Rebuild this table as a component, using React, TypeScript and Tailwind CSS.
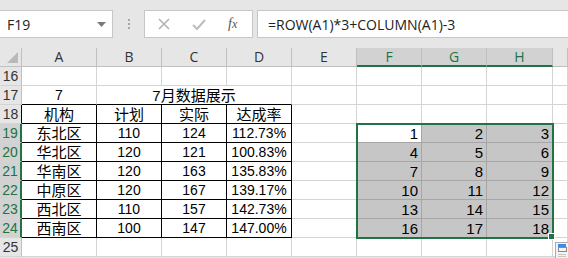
import { ReactNode } from "react";

const GREEN = "#217346";

// column widths in px: row header, A..H, and the partial column past H
const colWidths = [22, 75, 65, 65, 65, 65, 65, 65, 66, 15];
const colLetters = ["A", "B", "C", "D", "E", "F", "G", "H", ""];

const regions = [
  ["东北区", "110", "124", "112.73%"],
  ["华北区", "120", "121", "100.83%"],
  ["华南区", "120", "163", "135.83%"],
  ["中原区", "120", "167", "139.17%"],
  ["西北区", "110", "157", "142.73%"],
  ["西南区", "100", "147", "147.00%"],
];

const cellFont = {
  fontFamily: '"Liberation Sans", "Noto Sans CJK SC", sans-serif',
};

type CellProps = {
  children?: ReactNode;
  className?: string;
  span?: number;
};

const Cell = ({ children, className = "", span }: CellProps) => (
  <div
    className={`h-[19px] box-border border-r border-b flex items-center overflow-hidden whitespace-nowrap text-[14px] leading-none text-black ${className}`}
    style={span ? { gridColumn: `span ${span}` } : undefined}
  >
    {children}
  </div>
);

const RowHeader = ({ n, selected, tableEdge }: { n: number; selected?: boolean; tableEdge?: boolean }) => (
  <div
    className={`h-[19px] box-border border-b border-b-[#d4d4d4] flex items-center justify-center text-[14px] leading-none ${
      selected
        ? "bg-[#d2d2d2] text-[#217346] border-r-2 border-r-[#217346]"
        : tableEdge
          ? "bg-[#e6e6e6] text-[#333] border-r border-r-black"
          : "bg-[#e6e6e6] text-[#333] border-r border-r-[#c0c0c0]"
    }`}
  >
    {n}
  </div>
);

const NameBox = () => (
  <div className="w-[113px] h-[28px] box-border bg-white border-y border-r border-[#c6c6c6] flex items-center justify-between pl-[7px] pr-[6px]">
    <span className="text-[14px] text-[#222]" style={{ fontFamily: '"Open Sans", sans-serif' }}>
      F19
    </span>
    <svg width="9" height="5" viewBox="0 0 9 5">
      <path d="M0 0h9L4.5 5z" fill="#7a7a7a" />
    </svg>
  </div>
);

const FormulaButtons = () => (
  <div className="w-[109px] h-[28px] box-border bg-white border border-[#c6c6c6] flex items-center pl-[13px] gap-[22px]">
    <svg width="12" height="12" viewBox="0 0 12 12">
      <path d="M1 1l10 10M11 1L1 11" stroke="#b3b3b3" strokeWidth="1.6" />
    </svg>
    <svg width="14" height="11" viewBox="0 0 14 11">
      <path d="M1 6l4 4 8-9" stroke="#bcbcbc" strokeWidth="2" fill="none" />
    </svg>
    <span
      className="text-[14px] italic text-[#555] leading-none"
      style={{ fontFamily: '"Liberation Serif", serif' }}
    >
      f<span className="text-[12px]">x</span>
    </span>
  </div>
);

const Toolbar = () => (
  <div className="h-[48px] pt-[10px] flex items-start">
    <NameBox />
    <div className="w-[31px] h-[28px] flex flex-col items-center justify-center gap-[2px]">
      <div className="w-[2px] h-[2px] bg-[#a8a8a8]" />
      <div className="w-[2px] h-[2px] bg-[#a8a8a8]" />
      <div className="w-[2px] h-[2px] bg-[#a8a8a8]" />
    </div>
    <FormulaButtons />
    <div className="flex-1 ml-[4px] h-[28px] box-border bg-white border-y border-l border-[#c6c6c6] flex items-center pl-[10px]">
      <span className="text-[14px] text-[#222]" style={{ fontFamily: '"Open Sans", sans-serif' }}>
        =ROW(A1)*3+COLUMN(A1)-3
      </span>
    </div>
  </div>
);

const HeaderRow = () => (
  <>
    <div className="h-[19px] box-border border-r border-b border-[#c0c0c0] bg-[#e6e6e6] relative">
      <svg className="absolute right-[3px] bottom-[3px]" width="11" height="11" viewBox="0 0 11 11">
        <path d="M11 0V11H0z" fill="#b9b9b9" />
      </svg>
    </div>
    {colLetters.map((c, i) => {
      const sel = i >= 5 && i <= 7;
      return (
        <div
          key={i}
          className={`h-[19px] box-border border-r flex items-center justify-center text-[14px] leading-none ${
            sel
              ? "bg-[#d2d2d2] text-[#217346] border-r-[#c0c0c0] border-b-2 border-b-[#217346]"
              : "bg-[#e6e6e6] text-[#333] border-r-[#c0c0c0] border-b border-b-[#c0c0c0]"
          }`}
          style={{ fontFamily: '"Open Sans", sans-serif' }}
        >
          {c}
        </div>
      );
    })}
  </>
);

const grid = "border-r-[#d4d4d4] border-b-[#d4d4d4]";
const tbl = "border-r-black border-b-black justify-center";

const EmptyRest = ({ from }: { from: number }) => (
  <>
    {colLetters.slice(from).map((_, i) => (
      <Cell key={i} className={grid} />
    ))}
  </>
);

const Sheet = () => (
  <div
    className="grid bg-white"
    style={{ ...cellFont, gridTemplateColumns: colWidths.map((w) => `${w}px`).join(" ") }}
  >
    <HeaderRow />

    <RowHeader n={16} />
    <EmptyRest from={0} />

    <RowHeader n={17} />
    <Cell className="border-r-[#d4d4d4] border-b-black justify-center">7</Cell>
    <Cell span={3} className="border-r-[#d4d4d4] border-b-black justify-center text-[15px]">
      7月数据展示
    </Cell>
    <EmptyRest from={4} />

    <RowHeader n={18} tableEdge />
    {["机构", "计划", "实际", "达成率"].map((h) => (
      <Cell key={h} className={`${tbl} text-[15px]`}>
        {h}
      </Cell>
    ))}
    <EmptyRest from={4} />

    {regions.map((r, ri) => (
      <div key={r[0]} className="contents">
        <RowHeader n={19 + ri} selected />
        <Cell className={`${tbl} text-[15px]`}>{r[0]}</Cell>
        <Cell className={tbl}>{r[1]}</Cell>
        <Cell className={tbl}>{r[2]}</Cell>
        <Cell className={tbl}>{r[3]}</Cell>
        <Cell className={grid} />
        {[1, 2, 3].map((k) => {
          const active = ri === 0 && k === 1;
          return (
            <Cell
              key={k}
              className={`justify-end pr-[3px] text-[15px] border-r-[#a6a6a6] border-b-[#a6a6a6] ${
                active ? "bg-white" : "bg-[#c6c6c6]"
              }`}
            >
              {ri * 3 + k}
            </Cell>
          );
        })}
        <Cell className={grid} />
      </div>
    ))}

    <RowHeader n={25} />
    <EmptyRest from={0} />
  </div>
);

const SelectionOverlay = () => (
  <>
    <div
      className="absolute left-[356px] top-[123px] w-[198px] h-[116px] box-border border-2 pointer-events-none"
      style={{ borderColor: GREEN }}
    />
    <div className="absolute left-[548px] top-[233px] w-[7px] h-[7px] box-border border border-white bg-[#217346]" />
    <div className="absolute left-[555px] top-[242px] w-[16px] h-[17px] box-border bg-[#f3f3f3] border border-[#ababab]">
      <svg width="14" height="15" viewBox="0 0 14 15">
        <rect x="2" y="1" width="8" height="3" fill="#3c8ce6" />
        <rect x="2.5" y="4.5" width="8" height="4" fill="none" stroke="#8a8a8a" />
        <path d="M2.5 11.5h8M2.5 13.5h8" stroke="#9a9a9a" strokeDasharray="1 1" />
      </svg>
    </div>
  </>
);

export default function App() {
  return (
    <div className="w-[568px] h-[258px] bg-[#e6e6e6] overflow-hidden relative">
      <Toolbar />
      <Sheet />
      <SelectionOverlay />
    </div>
  );
}
